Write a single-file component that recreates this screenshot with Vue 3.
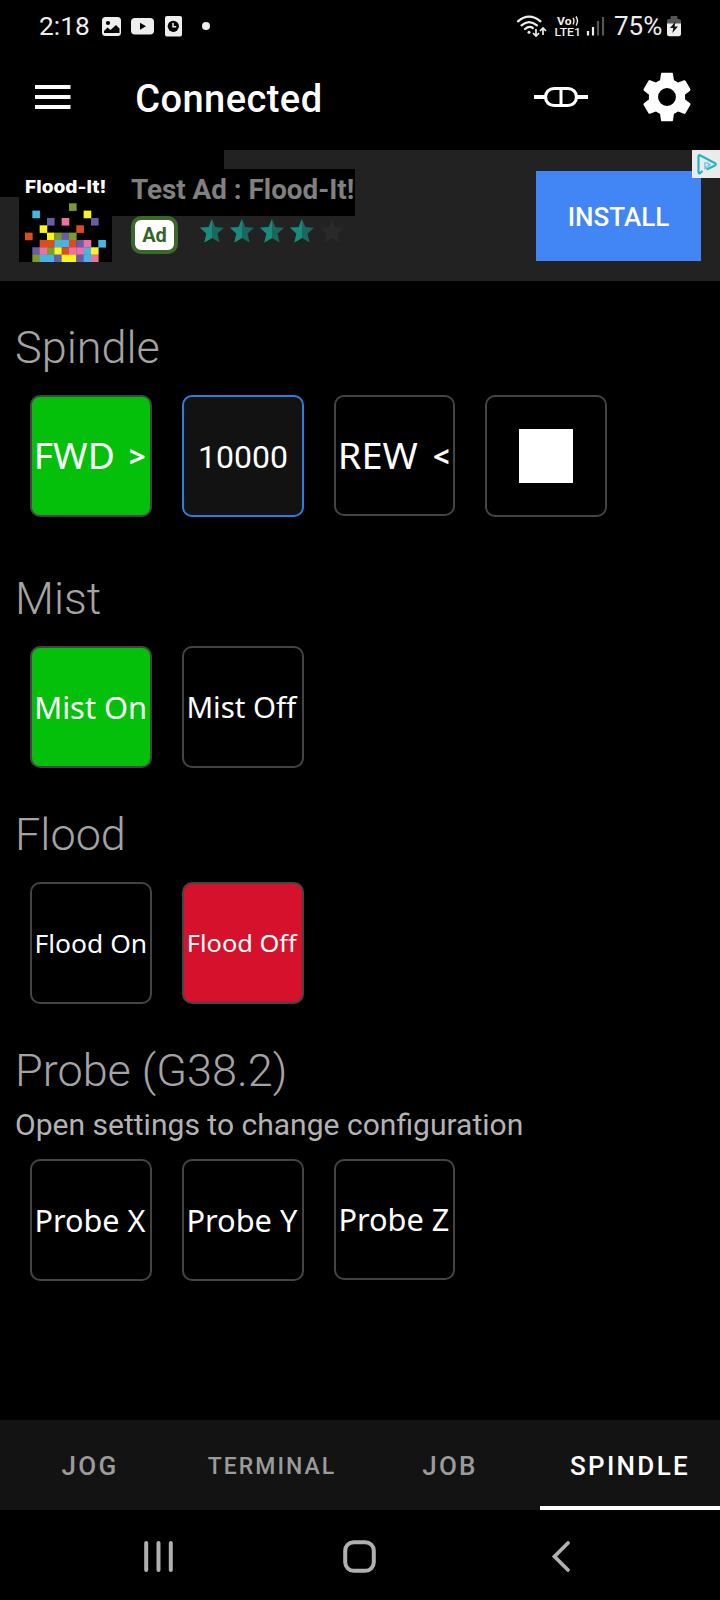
<script setup>
const colors = { o: '#7d9a2a', b: '#49b3e2', y: '#f7f71d', p: '#665fa8', k: '#f170a4', r: '#dd4b21' }
const rows = [
  '......o....',
  '.b......y..',
  '...p.k...p.',
  '..y....r...',
  'r..yopo....',
  '..rrbbrpk.b',
  '.pkoyrkkby.',
  '.obbpyypbk.',
]
const cells = rows.flatMap((row, y) =>
  [...row].map((c, x) => ({ x, y, fill: colors[c] })).filter((c) => c.fill)
)

const sections = [
  {
    id: 'spindle',
    title: 'Spindle',
    buttons: [
      { text: 'FWD', kind: 'green', size: 36, x: 1.8, y: 71.7, w: 81, arrow: '>' },
      { text: '10000', kind: 'input' },
      { text: 'REW', kind: '', size: 36, x: 1.8, y: 71.7, w: 80, arrow: '<', narrow: true },
      { text: '', kind: 'stop' },
    ],
  },
  {
    id: 'mist',
    title: 'Mist',
    buttons: [
      { text: 'Mist On', kind: 'green', size: 31, x: 2.2, y: 70.7, w: 113 },
      { text: 'Mist Off', kind: '', size: 28.6, x: 2.4, y: 69.7, w: 110 },
    ],
  },
  {
    id: 'flood',
    title: 'Flood',
    buttons: [
      { text: 'Flood On', kind: '', size: 25.6, x: 2.6, y: 68.7, w: 112.5 },
      { text: 'Flood Off', kind: 'red', size: 24, x: 2.8, y: 68, w: 110 },
    ],
  },
  {
    id: 'probe',
    title: 'Probe (G38.2)',
    note: 'Open settings to change configuration',
    buttons: [
      { text: 'Probe X', kind: '', size: 30, x: 2.4, y: 70.7, w: 111 },
      { text: 'Probe Y', kind: '', size: 30, x: 2.4, y: 70.7, w: 111 },
      { text: 'Probe Z', kind: '', size: 30, x: 2.4, y: 69.7, w: 111, narrow: true },
    ],
  },
]

const tabs = [
  { label: 'JOG' },
  { label: 'TERMINAL', small: true },
  { label: 'JOB' },
  { label: 'SPINDLE', active: true },
]
const star = '12,0 15.3,8 24,8.8 17.6,14.6 19.6,23.6 12,19 4.4,23.6 6.4,14.6 0,8.8 8.7,8'
</script>

<template>
  <div class="screen">
    <header class="status">
      <span class="clock">2:18</span>
      <svg class="notes" width="110" height="24" viewBox="101 14 110 24">
        <rect x="102" y="17" width="19" height="19" rx="3.500" fill="#eee" />
        <circle cx="108" cy="23" r="2.100" fill="#000" />
        <path d="M104 33v-2l3.500-3.500 3 2.500 5.500-5 3.500 3.500v4.500z" fill="#000" />
        <rect x="131" y="18" width="23" height="16.500" rx="4" fill="#eee" />
        <path d="M140 22.800v7l6-3.500z" fill="#000" />
        <rect x="165" y="16" width="17" height="20.500" rx="2" fill="#eee" />
        <circle cx="173.300" cy="26.300" r="5.600" fill="#000" />
        <path d="M173 22.800v4h3.200" fill="none" stroke="#eee" stroke-width="1.500" />
        <circle cx="206" cy="26" r="4" fill="#eee" />
      </svg>
      <svg class="net" width="92" height="26" viewBox="515 13 92 26">
        <g fill="none" stroke="#eee" stroke-width="2.200" stroke-linecap="round">
          <path d="M518 21.300q11-9.500 22.500 0" />
          <path d="M521.500 25.300q7.500-6.500 15.500 0" />
          <path d="M525 29q4.300-3.600 7.800-1" />
        </g>
        <circle cx="529" cy="32.300" r="1.500" fill="#eee" />
        <path d="M536 29v7M533 33l3 3 3-3M543 35v-7M540 31l3-3 3 3" fill="none" stroke="#eee" stroke-width="1.700" />
        <text x="557" y="24.700" font-size="11.800" font-weight="700" textLength="14.500" lengthAdjust="spacingAndGlyphs" fill="#eee">Vo</text>
        <path d="M573 18q2 3 0 6.500M576 16.500q3 4.500 0 9" fill="none" stroke="#eee" stroke-width="1.400" />
        <text x="554.500" y="36" font-size="11.800" font-weight="500" textLength="26.500" lengthAdjust="spacingAndGlyphs" fill="#eee">LTE1</text>
        <path d="M588 31v4.500M593 27v8.500" stroke="#eee" stroke-width="2.200" />
        <path d="M598 21v14.500M603 17v18.500" stroke="#555" stroke-width="2.200" />
      </svg>
      <span class="percent">75%</span>
      <svg class="battery" width="16" height="22" viewBox="666 15 16 22">
        <path d="M667 24v-3q0-2 2-2h1.500v-2q0-1 1-1h5q1 0 1 1v2h1.500q2 0 2 2v3z" fill="#555" />
        <path d="M667 23.500h14v10.500q0 2.300-2.300 2.300h-9.400q-2.300 0-2.300-2.300z" fill="#eee" />
        <path d="M675.500 21.500l-5.500 6.500h3.300l-1 5 5.700-6.500h-3.400z" fill="#111" />
      </svg>
    </header>

    <div class="toolbar">
      <svg class="menu" width="36" height="24" viewBox="0 0 36 24">
        <path d="M0 2h35.500M0 12h35.500M0 22h35.500" stroke="#fff" stroke-width="4" />
      </svg>
      <h1>Connected</h1>
      <svg class="link" width="54" height="22" viewBox="0 0 54 22">
        <path d="M0 11h11M43 11h11" stroke="#fff" stroke-width="4" />
        <rect x="11.500" y="2.500" width="31" height="17" rx="8.500" fill="none" stroke="#fff" stroke-width="3.200" />
        <path d="M27 3v16" stroke="#fff" stroke-width="3" />
      </svg>
      <svg class="gear" width="58" height="58" viewBox="0 0 24 24">
        <path fill="#fff" d="M19.430 12.980c.04-.32.070-.64.070-.98s-.03-.66-.07-.98l2.110-1.650c.19-.15.24-.42.12-.64l-2-3.460c-.12-.22-.39-.3-.61-.22l-2.490 1c-.52-.4-1.080-.73-1.690-.98l-.38-2.650C14.460 2.180 14.250 2 14 2h-4c-.25 0-.46.18-.49.42l-.38 2.650c-.61.25-1.170.59-1.690.98l-2.490-1c-.23-.09-.49 0-.61.22l-2 3.460c-.13.22-.07.49.12.64l2.110 1.650c-.04.32-.07.65-.07.98s.03.66.07.98l-2.110 1.650c-.19.15-.24.42-.12.64l2 3.460c.12.22.39.3.61.22l2.490-1c.52.4 1.080.73 1.690.98l.38 2.650c.03.24.24.42.49.42h4c.25 0 .46-.18.49-.42l.38-2.650c.61-.25 1.170-.59 1.690-.98l2.490 1c.23.09.49 0 .61-.22l2-3.460c.12-.22.07-.49-.12-.64l-2.110-1.650zM12 15.700a3.700 3.700 0 1 1 0-7.400 3.700 3.700 0 0 1 0 7.400z" />
      </svg>
    </div>

    <div class="ad">
      <svg class="ad-shade" width="720" height="131" viewBox="0 0 720 131">
        <path d="M0 0H224V19H355V66H112V112H19V47H0z" fill="#000" />
      </svg>
      <svg class="game" width="93" height="93" viewBox="19 169 93 93">
        <text x="25" y="193.400" font-size="17.500" font-weight="800" textLength="81.500" lengthAdjust="spacingAndGlyphs" fill="#fff">Flood-It!</text>
        <g transform="translate(25 203.300) scale(7.330)">
          <rect v-for="c in cells" :key="c.x + '-' + c.y" :x="c.x" :y="c.y" width="1.040" height="1.040" :fill="c.fill" />
        </g>
      </svg>
      <div class="ad-copy">
        <div class="ad-title">Test Ad : Flood-It!</div>
        <div class="ad-meta">
          <span class="badge">Ad</span>
          <svg v-for="n in 5" :key="n" class="star" width="24" height="24" viewBox="0 0 24 24">
            <polygon :points="star" :fill="n < 5 ? '#1c665d' : '#292929'" />
            <polygon v-if="n < 5" points="12,0 12,19 4.4,23.6 6.4,14.6 0,8.8 8.7,8" fill="#1a8a7c" />
          </svg>
        </div>
      </div>
      <div class="install">INSTALL</div>
      <svg class="choices" width="28" height="28" viewBox="0 0 28 28">
        <rect width="28" height="28" fill="#ebebeb" />
        <path d="M10.500 21l-2.500 2.200q-1.500.5-1.500-1.200V6.500q0-2 2-1l14.500 7.700q1.800 1.200 0 2.200L14.500 19.500" fill="none" stroke="#25b3c9" stroke-width="2.200" stroke-linejoin="round" />
        <path d="M13 12v6.500l5-3.700-3.500-2.300" fill="none" stroke="#72cbd9" stroke-width="1.600" />
      </svg>
    </div>

    <main>
      <section v-for="s in sections" :key="s.id" :class="s.id">
        <h2>{{ s.title }}</h2>
        <p v-if="s.note">{{ s.note }}</p>
        <div class="row">
          <div v-for="(b, i) in s.buttons" :key="i" class="btn" :class="[b.kind, { narrow: b.narrow }]">
            <svg v-if="b.size" width="118" height="118" viewBox="0 0 118 118">
              <text :x="b.x" :y="b.y" :font-size="b.size" :textLength="b.w" lengthAdjust="spacingAndGlyphs">{{ b.text }}</text>
              <text v-if="b.arrow" class="arrow" x="97" y="69.500" font-size="29">{{ b.arrow }}</text>
            </svg>
            <span v-else-if="b.kind === 'input'">{{ b.text }}</span>
            <i v-else class="square"></i>
          </div>
        </div>
      </section>
    </main>

    <nav class="tabs">
      <div v-for="t in tabs" :key="t.label" class="tab" :class="{ active: t.active, small: t.small }">{{ t.label }}</div>
    </nav>
    <footer class="system">
      <svg width="720" height="90" viewBox="0 1510 720 90">
        <g fill="none" stroke="#b0b0b0" stroke-width="4" stroke-linecap="round">
          <path d="M146.200 1543v27M158.500 1543v27M170.800 1543v27" />
          <rect x="345.200" y="1542.200" width="28.600" height="28.600" rx="8.500" />
          <path d="M568 1543l-13.500 13.500 13.500 13.500" stroke-width="3.800" />
        </g>
      </svg>
    </footer>
  </div>
</template>

<style>
body { background: #000; }
</style>
<style scoped>
.screen {
  width: 720px;
  height: 1600px;
  display: flex;
  flex-direction: column;
  background: #000;
  color: #fff;
  font-family: Roboto, "Liberation Sans", sans-serif;
  overflow: hidden;
}
svg { display: block; flex: none; }
h1, h2, p { margin: 0; font-weight: 400; white-space: nowrap; }
.status {
  height: 52px;
  display: flex;
  align-items: center;
  padding: 0 38px 0 39px;
  color: #eee;
  flex: none;
  box-sizing: border-box;
}
.clock, .percent { font-size: 26px; line-height: 52px; white-space: nowrap; }
.clock { width: 62px; font-size: 26.300px; }
.net { margin-left: auto; }
.percent { width: 52px; margin-left: 7px; }
.toolbar {
  height: 98px;
  display: flex;
  align-items: center;
  flex: none;
  box-sizing: border-box;
  padding: 0 24px 8px 34.500px;
}
.toolbar h1 { font-size: 38px; font-weight: 500; line-height: 90px; letter-spacing: 0.450px; margin: 4px 0 0 64.700px; }
.link { margin-left: auto; }
.gear { margin-left: 50px; }
.ad {
  position: relative;
  height: 131px;
  display: flex;
  align-items: flex-start;
  background: #222;
  flex: none;
  box-sizing: border-box;
  padding: 19px 19px 0;
}
.ad-shade { position: absolute; left: 0; top: 0; }
.game { position: relative; font-family: Inter, "Open Sans", sans-serif; }
.ad-copy { position: relative; margin-left: 19px; }
.ad-title { height: 47px; line-height: 41px; font-size: 27.800px; font-weight: 700; color: #808080; white-space: nowrap; }
.ad-meta { display: flex; align-items: flex-start; }
.badge {
  width: 47px;
  height: 38px;
  box-sizing: border-box;
  border: 4px solid #3c682b;
  border-radius: 10px;
  background: #fff;
  color: #356427;
  font-size: 20px;
  font-weight: 700;
  line-height: 31px;
  text-align: center;
  margin-right: 22px;
}
.star { margin: 3px 6px 0 0; }
.install {
  margin: 2px 0 0 auto;
  width: 165px;
  height: 90px;
  background: #4285f4;
  font-size: 26px;
  font-weight: 500;
  line-height: 92px;
  text-align: center;
}
.choices { position: absolute; right: 0; top: 0; }
main { flex: none; height: 1139px; padding-top: 36px; box-sizing: border-box; }
section { height: 236px; }
.spindle { height: 251px; }
.flood { height: 237px; }
h2 { height: 60px; line-height: 62px; font-size: 45px; font-weight: 300; color: #a4a4a4; padding-left: 15px; }
.probe h2 { line-height: 60px; }
p { height: 40px; line-height: 40px; margin-top: 4px; font-size: 30.060px; color: #b3b3b3; padding-left: 15px; }
.row { display: flex; gap: 30px; margin: 18px 0 0 30px; }
.probe .row { margin-top: 14px; }
.btn {
  width: 122px;
  height: 122px;
  box-sizing: border-box;
  border: 2px solid #444;
  border-radius: 10px;
  display: flex;
  align-items: center;
  justify-content: center;
}
.btn.narrow { width: 121px; height: 121px; justify-content: flex-start; align-items: flex-start; }
.btn text { fill: #fff; font-family: "Noto Sans", sans-serif; font-weight: 450; }
.btn text.arrow { font-weight: 700; }
.btn.green { background: #04c00b; }
.btn.red { background: #d5112b; }
.btn.input { background: #121212; border-color: #2b80de; font-size: 32px; line-height: 118px; padding-top: 1px; }
.square { width: 54px; height: 54px; background: #fff; }
.tabs { height: 90px; display: flex; background: #131313; flex: none; }
.tab {
  width: 180px;
  box-sizing: border-box;
  text-align: center;
  line-height: 92px;
  font-size: 26px;
  font-weight: 500;
  letter-spacing: 2.300px;
  color: #9b9b9b;
}
.tab.small { font-size: 23px; letter-spacing: 2px; padding-left: 4px; line-height: 93px; }
.tab.active { color: #fff; border-bottom: 4px solid #fff; }
.system { height: 90px; flex: none; }
</style>
